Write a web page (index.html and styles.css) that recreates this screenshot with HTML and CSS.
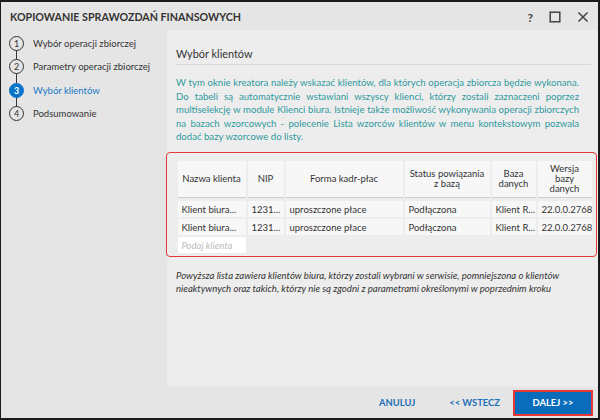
FILE: index.html
```html
<!DOCTYPE html>
<html lang="pl">
<head>
<meta charset="utf-8">
<link rel="stylesheet" href="styles.css">
</head>
<body>
<div class="window">
  <div class="titlebar">
    <div class="title">KOPIOWANIE SPRAWOZDAŃ FINANSOWYCH</div>
    <div class="controls">
      <span class="help">?</span>
      <svg class="ctl" width="12" height="12" viewBox="0 0 12 12"><rect x="1.2" y="1.2" width="9.6" height="9.6" fill="none" stroke="#444" stroke-width="1.5"/></svg>
      <svg class="ctl" width="12" height="12" viewBox="0 0 12 12"><path d="M1.5 1.5L10.5 10.5M10.5 1.5L1.5 10.5" stroke="#444" stroke-width="1.5"/></svg>
    </div>
  </div>
  <div class="main">
    <div class="steps">
      <div class="step"><span class="num">1</span><span class="lbl">Wybór operacji zbiorczej</span></div>
      <div class="step"><span class="num">2</span><span class="lbl">Parametry operacji zbiorczej</span></div>
      <div class="step active"><span class="num">3</span><span class="lbl">Wybór klientów</span></div>
      <div class="step last"><span class="num">4</span><span class="lbl">Podsumowanie</span></div>
    </div>
    <div class="panel">
      <div class="heading">Wybór klientów</div>
      <p class="info">
        <span class="ln">W tym oknie kreatora należy wskazać klientów, dla których operacja zbiorcza będzie wykonana.</span>
        <span class="ln">Do tabeli są automatycznie wstawiani wszyscy klienci, którzy zostali zaznaczeni poprzez</span>
        <span class="ln">multiselekcję w module Klienci biura. Istnieje także możliwość wykonywania operacji zbiorczych</span>
        <span class="ln">na bazach wzorcowych - polecenie Lista wzorców klientów w menu kontekstowym pozwala</span>
        <span class="ln last">dodać bazy wzorcowe do listy.</span>
      </p>
      <div class="tablebox">
        <div class="grid">
          <div class="th">Nazwa klienta</div>
          <div class="th">NIP</div>
          <div class="th">Forma kadr-płac</div>
          <div class="th">Status powiązania<br>z bazą</div>
          <div class="th">Baza<br>danych</div>
          <div class="th">Wersja<br>bazy<br>danych</div>

          <div class="td">Klient biura...</div>
          <div class="td">1231...</div>
          <div class="td">uproszczone płace</div>
          <div class="td">Podłączona</div>
          <div class="td">Klient R...</div>
          <div class="td">22.0.0.2768</div>

          <div class="td">Klient biura...</div>
          <div class="td">1231...</div>
          <div class="td">uproszczone płace</div>
          <div class="td">Podłączona</div>
          <div class="td">Klient R...</div>
          <div class="td">22.0.0.2768</div>

          <div class="td input">Podaj klienta</div>
        </div>
      </div>
      <p class="note">Powyższa lista zawiera klientów biura, którzy zostali wybrani w serwisie, pomniejszona o klientów<br>nieaktywnych oraz takich, którzy nie są zgodni z parametrami określonymi w poprzednim kroku</p>
    </div>
  </div>
  <div class="footer">
    <span class="btn link cancel">ANULUJ</span>
    <span class="btn link back">&lt;&lt; WSTECZ</span>
    <span class="btn primary">DALEJ &gt;&gt;</span>
  </div>
</div>
</body>
</html>
```
FILE: styles.css
```css
* { box-sizing: border-box; }
html, body { margin: 0; padding: 0; }
body {
  font-family: "Lato", "Liberation Sans", sans-serif;
  color: #333;
  background: #fff;
}
.window {
  width: 600px;
  height: 420px;
  border: 1px solid #1a1a1a;
  border-top-width: 2px;
  border-bottom-width: 2px;
  border-right-width: 2px;
  background: #e5e5e5;
  display: flex;
  flex-direction: column;
}
.titlebar {
  height: 28px;
  flex: none;
  display: flex;
  align-items: center;
  justify-content: space-between;
  padding: 0 9px 0 9px;
}
.title {
  font-size: 10.7px;
  font-weight: 700;
  color: #333;
  margin-top: 1px;
}
.controls {
  display: flex;
  align-items: center;
  margin-top: 2px;
}
.help {
  font-size: 12px;
  color: #444;
  font-weight: 700;
  margin-right: 16px;
}
.ctl + .ctl { margin-left: 16px; }
.main {
  flex: 1;
  display: flex;
  min-height: 0;
}
.steps {
  flex: none;
  width: 166px;
  padding: 2px 0 0 8px;
  display: flex;
  flex-direction: column;
}
.step {
  position: relative;
  display: flex;
  align-items: center;
  height: 23.3px;
  font-size: 9.5px;
}
.step .num {
  flex: none;
  width: 15px;
  height: 15px;
  border: 1.3px solid #333;
  border-radius: 50%;
  display: flex;
  align-items: center;
  justify-content: center;
  font-size: 9px;
  background: #e5e5e5;
  position: relative;
  z-index: 1;
}
.step:not(.last)::after {
  content: "";
  position: absolute;
  left: 7px;
  top: 18px;
  height: 10px;
  width: 1.3px;
  background: #333;
}
.step .lbl {
  margin-left: 9px;
  color: #333;
  white-space: nowrap;
}
.step.active .num {
  background: #0a74c9;
  border-color: #0a74c9;
  color: #fff;
  font-weight: 700;
}
.step.active .lbl { color: #1a78c9; }
.panel {
  flex: 1;
  min-width: 0;
  background: #ededed;
  padding: 0 7px 0 9px;
  display: flex;
  flex-direction: column;
}
.heading {
  font-size: 10.9px;
  line-height: 14px;
  color: #333;
  padding: 17px 0 3px 0;
  margin-left: -1px;
  padding-left: 1px;
  border-bottom: 1px solid #d9d9d9;
}
.info {
  margin: 11px 0 0 0;
  width: 403px;
  font-size: 9.6px;
  line-height: 13.5px;
  color: #2f9a9e;
}
.info .ln {
  display: block;
  white-space: nowrap;
  text-align: justify;
  text-align-last: justify;
}
.info .ln.last { text-align-last: left; }
.tablebox {
  margin: 8px -6px 0 -10px;
  border: 1.5px solid #e73838;
  border-radius: 4px;
  padding: 8.5px 0 0 10.5px;
  height: 105px;
}
.grid {
  display: grid;
  grid-template-columns: 68px 36px 117px 85px 44px 54px;
  grid-template-rows: 38px 16px 16px 16px;
  column-gap: 2px;
  row-gap: 2px;
  font-size: 9.5px;
}
.grid > div {
  background: #f7f7f7;
  color: #333;
  white-space: nowrap;
  overflow: hidden;
  display: flex;
  align-items: center;
}
.grid .th {
  justify-content: center;
  text-align: center;
  line-height: 10px;
  border-bottom: 1px solid #cfcfcf;
  margin-bottom: -1px;
  height: 37px;
}
.grid .td { padding: 0 4px; }
.grid .td.input {
  background: #fff;
  color: #bcbcbc;
  font-style: italic;
}
.note {
  margin: 12px 0 0 0;
  font-size: 9.6px;
  line-height: 13.5px;
  font-style: italic;
  color: #333;
  white-space: nowrap;
}
.footer {
  height: 31px;
  flex: none;
  display: flex;
  align-items: center;
  justify-content: flex-end;
  padding-right: 7px;
}
.btn {
  font-size: 9.4px;
  font-weight: 700;
  color: #1a6fb5;
}
.btn.cancel { margin-right: 34px; }
.btn.back { margin-right: 15px; }
.btn.primary {
  background: #0a6dbb;
  color: #fff;
  width: 76px;
  height: 22px;
  display: flex;
  align-items: center;
  justify-content: center;
  outline: 2px solid #e73838;
}
```
